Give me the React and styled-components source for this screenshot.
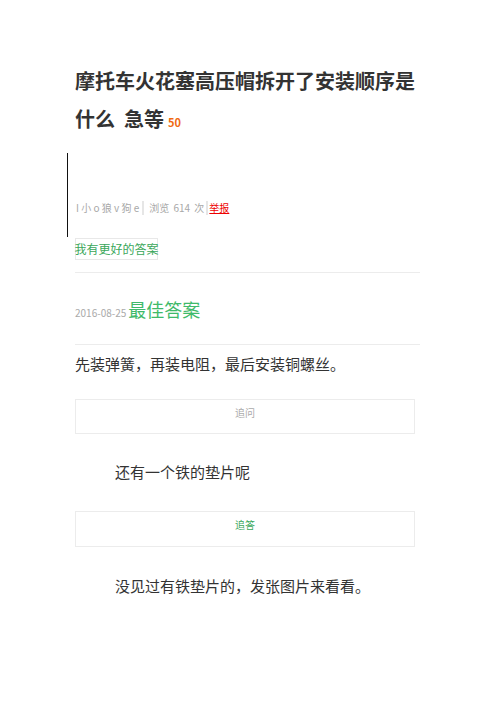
import React from 'react'
import styled, { createGlobalStyle } from 'styled-components'

const Global = createGlobalStyle`
  body {
    margin: 0;
    background: #fff;
    font-family: "Noto Sans CJK SC", "Noto Sans", sans-serif;
  }
`

const Page = styled.div`
  width: 345px;
  padding: 62px 0 0 75px;
`

const Title = styled.h1`
  margin: 0;
  font-size: 20px;
  line-height: 38px;
  font-weight: 700;
  color: #333;
`

const Reward = styled.span`
  font-size: 11px;
  line-height: 0;
  font-weight: 700;
  color: #f06a12;
  margin-left: 4px;
`

const Meta = styled.div`
  margin: 15px 0 0 -8px;
  height: 84px;
  border-left: 1px solid #111;
  padding: 0 0 22px 8px;
  box-sizing: border-box;
  display: flex;
  align-items: flex-end;
  font-size: 10px;
  line-height: 14px;
  color: #a8a8a8;
`

const User = styled.span`
  padding-right: 3px;
  border-right: 2px solid #e6e6e6;
`

const Views = styled.span`
  padding: 0 2px 0 5px;
  word-spacing: 2px;
`

const Report = styled.a`
  color: #e00;
  font-size: 10px;
  text-decoration: underline;
  border-left: 2px solid #e6e6e6;
  padding-left: 1px;
`

const BetterButton = styled.div`
  margin-top: 1px;
  width: 83px;
  height: 22px;
  box-sizing: border-box;
  border: 1px solid #e8e8e8;
  display: flex;
  align-items: center;
  justify-content: center;
  font-size: 12px;
  line-height: 14px;
  color: #3aa75a;
  white-space: nowrap;
`

const Divider = styled.div`
  height: 1px;
  background: #ececec;
  margin-top: ${p => p.$top || 0}px;
`

const BestRow = styled.div`
  margin-top: 24px;
  height: 24px;
  display: flex;
  align-items: baseline;
  gap: 2px;
`

const DateText = styled.span`
  font-size: 10px;
  color: #aaa;
`

const BestLabel = styled.span`
  font-size: 18px;
  line-height: 24px;
  color: #3fba6a;
`

const Answer = styled.p`
  margin: ${p => p.$top}px 0 0 ${p => (p.$indent ? 40 : 0)}px;
  font-size: 15px;
  line-height: 24px;
  color: #333;
`

const Thread = styled.div`
  margin-top: ${p => p.$top}px;
  width: 340px;
  height: ${p => p.$h}px;
  box-sizing: border-box;
  border: 1px solid #ececec;
  text-align: center;
  padding-top: 6px;
  font-size: 10px;
  line-height: 14px;
  color: ${p => (p.$green ? '#3aa75a' : '#aaa')};
`

export default function App() {
  return (
    <Page>
      <Global />
      <Title>
        摩托车火花塞高压帽拆开了安装顺序是什么&nbsp; 急等<Reward>50</Reward>
      </Title>
      <Meta>
        <User>I 小 o 狼 v 狗 e</User>
        <Views>浏览 614 次</Views>
        <Report>举报</Report>
      </Meta>
      <BetterButton>我有更好的答案</BetterButton>
      <Divider $top={12} />
      <BestRow>
        <DateText>2016-08-25</DateText>
        <BestLabel>最佳答案</BestLabel>
      </BestRow>
      <Divider $top={23} />
      <Answer $top={7}>先装弹簧，再装电阻，最后安装铜螺丝。</Answer>
      <Thread $top={23} $h={35}>追问</Thread>
      <Answer $top={26} $indent>还有一个铁的垫片呢</Answer>
      <Thread $top={27} $h={36} $green>追答</Thread>
      <Answer $top={27} $indent>没见过有铁垫片的，发张图片来看看。</Answer>
    </Page>
  )
}
